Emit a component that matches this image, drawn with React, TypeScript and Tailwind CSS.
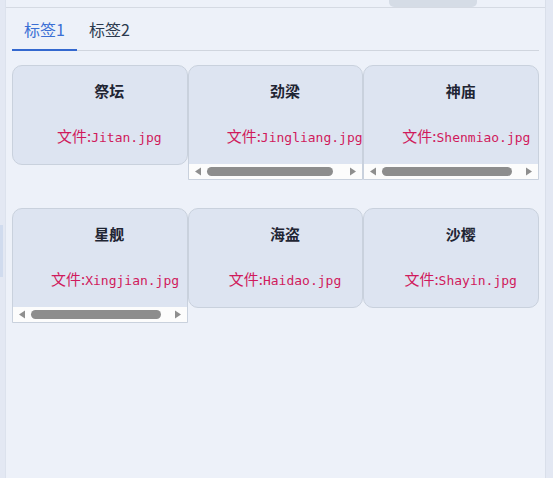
import React from "react";

type Item = { title: string; file: string; scroll?: number };

const rows: Item[][] = [
  [
    { title: "祭坛", file: "Jitan.jpg" },
    { title: "劲梁", file: "Jingliang.jpg", scroll: 126 },
    { title: "神庙", file: "Shenmiao.jpg", scroll: 130 },
  ],
  [
    { title: "星舰", file: "Xingjian.jpg", scroll: 130 },
    { title: "海盗", file: "Haidao.jpg" },
    { title: "沙樱", file: "Shayin.jpg" },
  ],
];

const cjk = { fontFamily: '"Noto Sans CJK SC", "Noto Sans", sans-serif' };
const mono = { fontFamily: '"DejaVu Sans Mono", "Liberation Mono", monospace' };

function Scrollbar({ thumb }: { thumb: number }) {
  return (
    <div className="h-[15px] bg-[#fcfcfc] flex items-center pl-[6px] pr-[6px]">
      <svg width="6" height="9" viewBox="0 0 6 9">
        <path d="M0 4.5 L6 0.5 L6 8.5 Z" fill="#8e8e8e" />
      </svg>
      <div
        className="h-[9px] rounded-full bg-[#8d8d8d] ml-[6px]"
        style={{ width: thumb }}
      />
      <div className="flex-1" />
      <svg width="6" height="9" viewBox="0 0 6 9">
        <path d="M6 4.5 L0 0.5 L0 8.5 Z" fill="#8e8e8e" />
      </svg>
    </div>
  );
}

function Card({ item }: { item: Item }) {
  const scroll = item.scroll !== undefined;
  return (
    <div
      className={
        "border border-[#c9d1dd] bg-[#dde4f1] overflow-hidden " +
        (scroll ? "rounded-t-[10px]" : "rounded-[10px]")
      }
    >
      <div className="h-[98px] pl-[38px] pr-[19px] pt-[14px] text-center whitespace-nowrap">
        <div
          className="text-[15px] leading-[21px] font-bold text-[#1f2533]"
          style={cjk}
        >
          {item.title}
        </div>
        <div className="mt-[24px] leading-[22px] text-[#d01a5c] whitespace-nowrap">
          <span className="text-[15px]" style={cjk}>
            文件:
          </span>
          <span className="text-[13px]" style={mono}>
            {item.file}
          </span>
        </div>
      </div>
      {scroll && <Scrollbar thumb={item.scroll!} />}
    </div>
  );
}

export default function App() {
  return (
    <div className="w-[553px] h-[478px] flex bg-[#edf1f9] overflow-hidden">
      <div className="w-[6px] h-full bg-[#e3e8f3] border-r border-[#dce2ed] flex flex-col">
        <div className="h-[225px]" />
        <div className="w-[3px] h-[52px] bg-[#d0dbee]" />
      </div>
      <div className="flex-1 flex flex-col">
        <div className="h-[8px] border-b border-[#d5dae3] flex">
          <div className="ml-[383px] w-[88px] h-[7px] bg-[#d5dce6] rounded-b-[5px]" />
        </div>
        <div className="pl-[6px] pr-[6px]">
          <div className="flex border-b border-[#d0d5de]" style={cjk}>
            <div className="-mb-px pt-[11px] pb-[9px] px-[12px] leading-[21px] text-[16px] text-[#3b6fd4] border-b-2 border-[#3468cf]">
              标签1
            </div>
            <div className="-mb-px pt-[11px] pb-[9px] px-[12px] leading-[21px] text-[16px] text-[#2c3a4f] border-b-2 border-transparent">
              标签2
            </div>
          </div>
          <div className="mt-[14px] flex flex-col gap-[28px]">
            {rows.map((row, i) => (
              <div key={i} className="grid grid-cols-3 items-start">
                {row.map((item) => (
                  <Card key={item.title} item={item} />
                ))}
              </div>
            ))}
          </div>
        </div>
      </div>
      <div className="w-[8px] h-full bg-[#e3e8f3] border-l border-[#d9dfea]" />
    </div>
  );
}
